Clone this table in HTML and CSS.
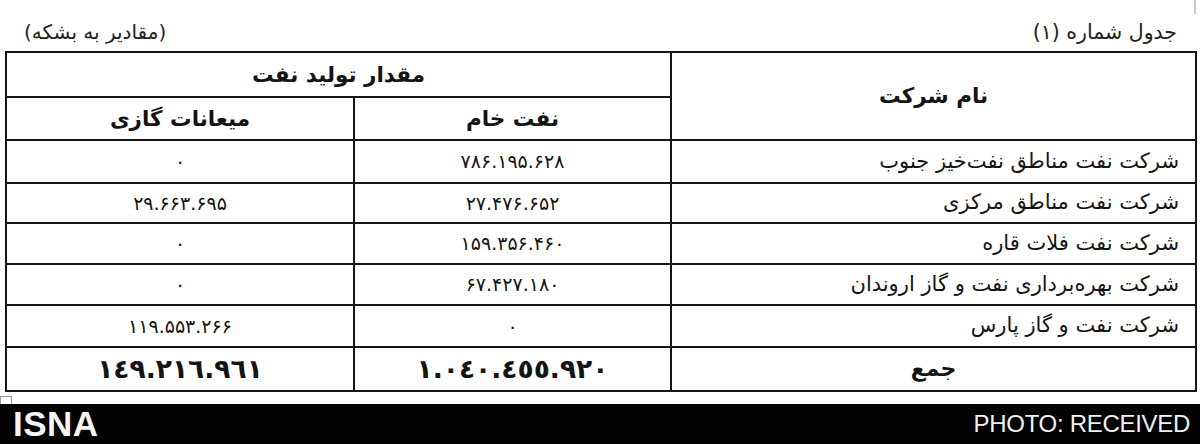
FILE: index.html
```html
<!DOCTYPE html>
<html lang="fa">
<head>
<meta charset="utf-8">
<title>جدول شماره (۱)</title>
<link rel="stylesheet" href="styles.css">
</head>
<body>
<div class="page">
  <div class="corner-mark"></div>
  <div class="captions">
    <div class="caption caption-unit" dir="rtl">(مقادیر به بشکه)</div>
    <div class="caption caption-title" dir="rtl">جدول شماره (۱)</div>
  </div>
  <table class="data" dir="rtl">
    <colgroup>
      <col class="col-name">
      <col class="col-crude">
      <col class="col-gas">
    </colgroup>
    <thead>
      <tr class="head-1">
        <th rowspan="2" class="th-name">نام شرکت</th>
        <th colspan="2">مقدار تولید نفت</th>
      </tr>
      <tr class="head-2">
        <th>نفت خام</th>
        <th>میعانات گازی</th>
      </tr>
    </thead>
    <tbody>
      <tr class="row r1">
        <td class="name">شرکت نفت مناطق نفت‌خیز جنوب</td>
        <td class="num">۷۸۶.۱۹۵.۶۲۸</td>
        <td class="num">۰</td>
      </tr>
      <tr class="row r2">
        <td class="name">شرکت نفت مناطق مرکزی</td>
        <td class="num">۲۷.۴۷۶.۶۵۲</td>
        <td class="num">۲۹.۶۶۳.۶۹۵</td>
      </tr>
      <tr class="row r3">
        <td class="name">شرکت نفت فلات قاره</td>
        <td class="num">۱۵۹.۳۵۶.۴۶۰</td>
        <td class="num">۰</td>
      </tr>
      <tr class="row r4">
        <td class="name">شرکت بهره‌برداری نفت و گاز اروندان</td>
        <td class="num">۶۷.۴۲۷.۱۸۰</td>
        <td class="num">۰</td>
      </tr>
      <tr class="row r5">
        <td class="name">شرکت نفت و گاز پارس</td>
        <td class="num">۰</td>
        <td class="num">۱۱۹.۵۵۳.۲۶۶</td>
      </tr>
      <tr class="total">
        <td class="total-label">جمع</td>
        <td class="total-num">١.٠٤٠.٤٥٥.٩٢٠</td>
        <td class="total-num">١٤٩.٢١٦.٩٦١</td>
      </tr>
    </tbody>
  </table>
  <div class="spacer"><span class="handle"></span></div>
  <div class="footer">
    <span class="logo">ISNA</span>
    <span class="credit">PHOTO: RECEIVED</span>
  </div>
</div>
</body>
</html>
```

FILE: styles.css
```css
html, body {
  margin: 0;
  padding: 0;
  background: #ffffff;
}

body {
  width: 1200px;
  height: 444px;
  overflow: hidden;
  font-family: "DejaVu Sans", "Noto Sans", sans-serif;
  color: #141414;
}

.page {
  position: relative;
  width: 1200px;
  height: 444px;
  display: flex;
  flex-direction: column;
}

.corner-mark {
  position: absolute;
  top: 0;
  right: 4px;
  width: 2px;
  height: 14px;
  background: #c8c8c8;
}

.captions {
  height: 52px;
  box-sizing: border-box;
  display: flex;
  justify-content: space-between;
  align-items: flex-end;
  padding: 0 23px 6px 24px;
  direction: ltr;
}

.caption {
  font-size: 20px;
  line-height: 26px;
  color: #222;
}

.caption-title {
  font-size: 20.5px;
}

.data {
  margin-left: 5px;
  width: 1190px;
  border-collapse: collapse;
  table-layout: fixed;
}

.col-name { width: 525px; }
.col-crude { width: 317px; }
.col-gas { width: 348px; }

.data th,
.data td {
  border: 2px solid #161616;
  padding: 0;
  text-align: center;
  vertical-align: middle;
  line-height: 1.2;
}

.data th {
  font-weight: bold;
  font-size: 21.5px;
}

.head-1 { height: 45px; }
.head-2 { height: 43px; }

.row { height: 41px; }
.r1 { height: 43px; }
.r2 { height: 40px; }
.r5 { height: 42px; }

.name {
  text-align: right !important;
  padding-right: 16px !important;
  font-size: 21px;
}

.num {
  font-size: 19px;
}

.total { height: 44px; }

.total-label {
  font-weight: bold;
  font-size: 22px;
}

.total-num {
  font-weight: bold;
  font-size: 26.5px;
}

.spacer {
  height: 12px;
  display: flex;
  align-items: flex-end;
}

.handle {
  display: block;
  width: 10px;
  height: 7px;
  border: 1px solid #9a9a9a;
  border-bottom: none;
  background: #fff;
}

.footer {
  height: 41px;
  background: #020202;
  display: flex;
  justify-content: space-between;
  align-items: center;
  padding: 0 10px 0 13px;
  direction: ltr;
}

.logo {
  font-family: "Liberation Sans", Arial, sans-serif;
  font-weight: bold;
  font-size: 35px;
  letter-spacing: 0.5px;
  color: #f4f4f4;
  line-height: 1;
}

.credit {
  font-family: "Liberation Sans", Arial, sans-serif;
  font-size: 24px;
  letter-spacing: -0.3px;
  color: #f0f0f0;
  line-height: 1;
}
```
